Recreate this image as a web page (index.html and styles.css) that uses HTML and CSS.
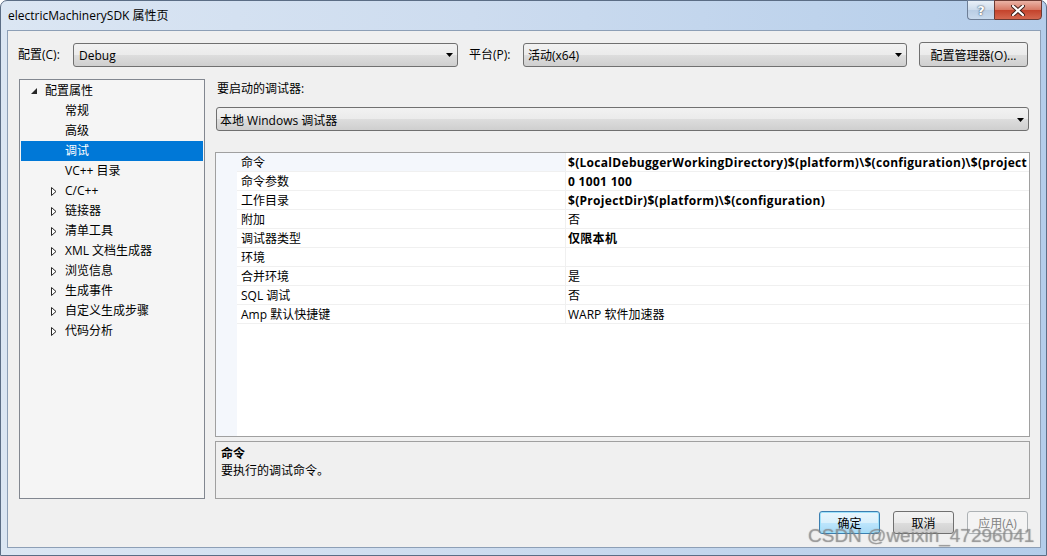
FILE: index.html
```html
<!DOCTYPE html>
<html lang="zh-CN">
  <head>
    <meta charset="UTF-8" />
    <title>electricMachinerySDK 属性页</title>
    <link rel="stylesheet" href="styles.css">
  </head>
  <body>
    <div class="window">
      <div class="titlebar">
        <span class="title">electricMachinerySDK 属性页</span>
        <div class="caption-btns">
          <span class="cap help">?</span>
          <span class="cap close">
            <svg width="14" height="11" viewBox="0 0 14 11">
              <path d="M2 1 L12 10 M12 1 L2 10" stroke="#3b1d18" stroke-width="4" stroke-linecap="round" />
              <path d="M2 1 L12 10 M12 1 L2 10" stroke="#fff" stroke-width="2.2" stroke-linecap="round" />
            </svg>
          </span>
        </div>
      </div>

      <div class="client">
        <div class="config-row">
          <span class="lbl cfg-lbl">配置(C):</span>
          <div class="combo cfg-combo">
            <span>Debug</span>
            <svg class="arrow" width="7" height="4" viewBox="0 0 7 4"><polygon points="0,0 7,0 3.5,4" /></svg>
          </div>
          <span class="lbl plat-lbl">平台(P):</span>
          <div class="combo plat-combo">
            <span>活动(x64)</span>
            <svg class="arrow" width="7" height="4" viewBox="0 0 7 4"><polygon points="0,0 7,0 3.5,4" /></svg>
          </div>
          <button class="btn mgr-btn">配置管理器(O)...</button>
        </div>

        <div class="main">
          <ul class="tree">
            <li class="node root">
              <span class="tw"><svg width="6" height="6" viewBox="0 0 6 6"><polygon points="6,0 6,6 0,6" fill="#262626" /></svg></span>
              配置属性
            </li>
            <li class="node"><span class="tw"></span>常规</li>
            <li class="node"><span class="tw"></span>高级</li>
            <li class="node selected"><span class="tw"></span>调试</li>
            <li class="node"><span class="tw"></span>VC++ 目录</li>
            <li class="node"><span class="tw"><svg class="closed" width="6" height="9" viewBox="0 0 6 9"><polygon points="0.5,0.5 5,4.5 0.5,8.5" /></svg></span>C/C++</li>
            <li class="node"><span class="tw"><svg class="closed" width="6" height="9" viewBox="0 0 6 9"><polygon points="0.5,0.5 5,4.5 0.5,8.5" /></svg></span>链接器</li>
            <li class="node"><span class="tw"><svg class="closed" width="6" height="9" viewBox="0 0 6 9"><polygon points="0.5,0.5 5,4.5 0.5,8.5" /></svg></span>清单工具</li>
            <li class="node"><span class="tw"><svg class="closed" width="6" height="9" viewBox="0 0 6 9"><polygon points="0.5,0.5 5,4.5 0.5,8.5" /></svg></span>XML 文档生成器</li>
            <li class="node"><span class="tw"><svg class="closed" width="6" height="9" viewBox="0 0 6 9"><polygon points="0.5,0.5 5,4.5 0.5,8.5" /></svg></span>浏览信息</li>
            <li class="node"><span class="tw"><svg class="closed" width="6" height="9" viewBox="0 0 6 9"><polygon points="0.5,0.5 5,4.5 0.5,8.5" /></svg></span>生成事件</li>
            <li class="node"><span class="tw"><svg class="closed" width="6" height="9" viewBox="0 0 6 9"><polygon points="0.5,0.5 5,4.5 0.5,8.5" /></svg></span>自定义生成步骤</li>
            <li class="node"><span class="tw"><svg class="closed" width="6" height="9" viewBox="0 0 6 9"><polygon points="0.5,0.5 5,4.5 0.5,8.5" /></svg></span>代码分析</li>
          </ul>

          <div class="right">
            <div class="dbg-label">要启动的调试器:</div>
            <div class="combo dbg-combo">
              <span>本地 Windows 调试器</span>
              <svg class="arrow" width="7" height="4" viewBox="0 0 7 4"><polygon points="0,0 7,0 3.5,4" /></svg>
            </div>

            <div class="grid">
              <div class="gutter"></div>
              <div class="rows">
                <div class="prow sel"><span class="pname">命令</span><span class="pval bold">$(LocalDebuggerWorkingDirectory)$(platform)\$(configuration)\$(project</span></div>
                <div class="prow"><span class="pname">命令参数</span><span class="pval bold">0 1001 100</span></div>
                <div class="prow"><span class="pname">工作目录</span><span class="pval bold">$(ProjectDir)$(platform)\$(configuration)</span></div>
                <div class="prow"><span class="pname">附加</span><span class="pval">否</span></div>
                <div class="prow"><span class="pname">调试器类型</span><span class="pval bold">仅限本机</span></div>
                <div class="prow"><span class="pname">环境</span><span class="pval"></span></div>
                <div class="prow"><span class="pname">合并环境</span><span class="pval">是</span></div>
                <div class="prow"><span class="pname">SQL 调试</span><span class="pval">否</span></div>
                <div class="prow"><span class="pname">Amp 默认快捷键</span><span class="pval">WARP 软件加速器</span></div>
              </div>
            </div>

            <div class="desc">
              <div class="desc-title">命令</div>
              <div>要执行的调试命令。</div>
            </div>
          </div>
        </div>

        <div class="footer">
          <button class="btn default">确定</button>
          <button class="btn">取消</button>
          <button class="btn" disabled>应用(A)</button>
        </div>
      </div>

      <div class="watermark">CSDN @weixin_47296041</div>
    </div>
  </body>
</html>
```

FILE: styles.css
```css
@charset 'utf-8';
* {
  margin: 0;
  padding: 0;
  box-sizing: border-box;
}

body {
  width: 1047px;
  height: 556px;
  overflow: hidden;
  background: #fff;
  font-family: "Open Sans", "Noto Sans CJK SC", sans-serif;
  font-size: 12px;
  color: #000;
}

/* 창 프레임 */
.window {
  position: relative;
  width: 1047px;
  height: 556px;
  display: flex;
  flex-direction: column;
  padding: 0 5px 7px 6px;
  border: 1px solid #5b6d85;
  border-radius: 7px 7px 0 0;
  background: linear-gradient(90deg, #dbe6f3 0%, #cddcef 45%, #b4cdea 100%);
}

.titlebar {
  height: 29px;
  display: flex;
  align-items: center;
  justify-content: space-between;
}
.title {
  padding-left: 1px;
  line-height: 16px;
  color: #000;
}
.caption-btns {
  display: flex;
  align-self: flex-start;
  margin-top: -1px;
  margin-right: -1px;
}
.cap {
  height: 20px;
  display: flex;
  align-items: center;
  justify-content: center;
  border: 1px solid #6d7e96;
}
.help {
  width: 27px;
  border-radius: 0 0 0 4px;
  border-right: none;
  background: linear-gradient(#e9f0f8, #ccdbeb 50%, #b9cde4 51%, #c9daee);
  font-family: "DejaVu Sans", sans-serif;
  font-weight: bold;
  font-size: 13px;
  color: #fff;
  text-shadow: 0 0 2px #3e4f66, 0 0 1px #3e4f66;
}
.close {
  width: 48px;
  border-color: #6b3a33;
  border-radius: 0 0 4px 0;
  background: linear-gradient(#eab3a6, #d77a66 48%, #c4432c 52%, #d4674f);
}

.client {
  flex: 1;
  display: flex;
  flex-direction: column;
  background: #f0f0f0;
  border: 1px solid #8d9fb6;
}

/* 구성 줄 */
.config-row {
  height: 25px;
  margin-top: 11px;
  padding-left: 10px;
  display: flex;
  align-items: center;
}
.lbl {
  line-height: 16px;
  padding-top: 1px;
}
.cfg-lbl {
  width: 55px;
}
.plat-lbl {
  width: 54px;
  margin-left: 11px;
}
.combo {
  height: 24px;
  display: flex;
  align-items: center;
  justify-content: space-between;
  padding: 1px 4px 0 5px;
  border: 1px solid #707070;
  border-radius: 3px;
  background: linear-gradient(#f2f2f2, #ebebeb 50%, #dddddd 51%, #cfcfcf);
  white-space: nowrap;
}
.cfg-combo {
  width: 385px;
}
.plat-combo {
  width: 384px;
  padding-left: 4px;
}
.arrow {
  fill: #000;
}

.btn {
  height: 23px;
  border: 1px solid #707070;
  border-radius: 3px;
  background: linear-gradient(#f2f2f2, #ebebeb 50%, #dddddd 51%, #cfcfcf);
  font-family: inherit;
  font-size: 12px;
  color: #000;
}
.mgr-btn {
  width: 109px;
  height: 25px;
  margin-left: 12px;
}

/* 본문 */
.main {
  height: 420px;
  margin-top: 12px;
  margin-left: 11px;
  display: flex;
  gap: 10px;
}

.tree {
  width: 186px;
  list-style: none;
  border: 1px solid #828790;
  background: #f5f5f5;
  padding-top: 1px;
}
.node {
  height: 20px;
  display: flex;
  align-items: center;
  padding-left: 30px;
  margin: 0 1px;
  line-height: 16px;
  white-space: nowrap;
}
.node.root {
  padding-left: 10px;
}
.tw {
  width: 14px;
  display: flex;
  align-items: center;
}
.closed {
  fill: #fff;
  stroke: #262626;
  stroke-width: 1;
}
.node.selected {
  background: #0078d7;
  color: #fff;
}

.right {
  width: 815px;
  display: flex;
  flex-direction: column;
}
.dbg-label {
  height: 20px;
  line-height: 20px;
  padding-left: 2px;
}
.dbg-combo {
  margin: 8px 1px 0 1px;
  padding-left: 3px;
}

.grid {
  height: 285px;
  margin-top: 21px;
  display: flex;
  border: 1px solid #a0a0a0;
  background: #fff;
}
.gutter {
  width: 21px;
  background: #f4f7fc;
}
.rows {
  flex: 1;
  overflow: hidden;
}
.prow {
  height: 19px;
  display: flex;
  border-bottom: 1px solid #f0f0f0;
  line-height: 16px;
  white-space: nowrap;
}
.pname {
  width: 329px;
  padding: 2px 0 0 4px;
  border-right: 1px solid #f0f0f0;
}
.prow.sel .pname {
  background: #f4f7fc;
}
.pval {
  flex: 1;
  padding: 2px 0 0 2px;
  overflow: hidden;
}
.bold {
  font-weight: bold;
  letter-spacing: 0.3px;
}

.desc {
  height: 58px;
  margin-top: 4px;
  padding: 3px 5px;
  border: 1px solid #a0a0a0;
  background: #f0f0f0;
  line-height: 17px;
}
.desc-title {
  font-weight: bold;
}

/* 하단 버튼 */
.footer {
  margin-top: 12px;
  padding-right: 12px;
  display: flex;
  justify-content: flex-end;
  gap: 13px;
}
.footer .btn {
  width: 61px;
}
.btn.default {
  border-color: #3c7fb1;
  background: linear-gradient(#eaf6fd, #d9f0fc 50%, #bee6fd 51%, #a7d9f5);
  box-shadow: inset 0 0 0 1px #9fe2fb;
}
.btn:disabled {
  border-color: #adb2b5;
  background: #f4f4f4;
  color: #838383;
}

.watermark {
  position: absolute;
  left: 807px;
  top: 524px;
  font-family: "Liberation Sans", Arial, sans-serif;
  font-size: 19px;
  line-height: 22px;
  color: rgba(150, 150, 150, 0.55);
  text-shadow: 0 0 1px rgba(90, 90, 90, 0.6);
  white-space: nowrap;
}
```
